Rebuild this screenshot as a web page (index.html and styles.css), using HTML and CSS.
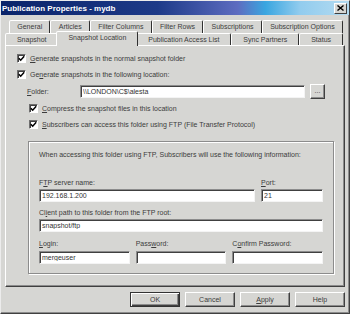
FILE: index.html
```html
<!DOCTYPE html>
<html lang="en">
<head>
<meta charset="UTF-8" />
<title>Publication Properties - mydb</title>
<link rel="stylesheet" href="styles.css">
</head>
<body>
  <div class="dialog">

    <!-- barra de titulo -->
    <div class="titlebar">
      <span class="title">Publication Properties - mydb</span>
      <span class="close">
        <svg width="7" height="6" viewBox="0 0 7 6"><path d="M0.5 0.5 L6.5 5.5 M6.5 0.5 L0.5 5.5" stroke="#000" stroke-width="1.4" fill="none"/></svg>
      </span>
    </div>

    <div class="content">
      <!-- abas -->
      <div class="tabs">
        <div class="tab-row back">
          <div class="tab">General</div>
          <div class="tab">Articles</div>
          <div class="tab">Filter Columns</div>
          <div class="tab">Filter Rows</div>
          <div class="tab">Subscriptions</div>
          <div class="tab">Subscription Options</div>
        </div>
        <div class="tab-row front">
          <div class="tab">Snapshot</div>
          <div class="tab active">Snapshot Location</div>
          <div class="tab">Publication Access List</div>
          <div class="tab">Sync Partners</div>
          <div class="tab">Status</div>
        </div>
      </div>

      <!-- painel da aba -->
      <div class="panel">
        <label class="check-row first">
          <span class="checkbox"><svg width="7" height="7" viewBox="0 0 7 7"><path d="M0.8 3.2 L2.7 5.2 L6.2 1.2" stroke="#000" stroke-width="1.5" fill="none"/></svg></span>
          <span><u>G</u>enerate snapshots in the normal snapshot folder</span>
        </label>
        <label class="check-row">
          <span class="checkbox"><svg width="7" height="7" viewBox="0 0 7 7"><path d="M0.8 3.2 L2.7 5.2 L6.2 1.2" stroke="#000" stroke-width="1.5" fill="none"/></svg></span>
          <span>Ge<u>n</u>erate snapshots in the following location:</span>
        </label>

        <div class="folder-row">
          <span class="folder-label"><u>F</u>older:</span>
          <input class="text-box folder-box" type="text" value="\\LONDON\C$\alesta" readonly>
          <span class="browse">...</span>
        </div>

        <label class="check-row sub">
          <span class="checkbox"><svg width="7" height="7" viewBox="0 0 7 7"><path d="M0.8 3.2 L2.7 5.2 L6.2 1.2" stroke="#000" stroke-width="1.5" fill="none"/></svg></span>
          <span><u>C</u>ompress the snapshot files in this location</span>
        </label>
        <label class="check-row sub">
          <span class="checkbox"><svg width="7" height="7" viewBox="0 0 7 7"><path d="M0.8 3.2 L2.7 5.2 L6.2 1.2" stroke="#000" stroke-width="1.5" fill="none"/></svg></span>
          <span><u>S</u>ubscribers can access this folder using FTP (File Transfer Protocol)</span>
        </label>

        <!-- caixa FTP -->
        <div class="group">
          <p class="info">When accessing this folder using FTP, Subscribers will use the following information:</p>

          <div class="grid server">
            <div class="field">
              <span class="field-label">F<u>T</u>P server name:</span>
              <input class="text-box" type="text" value="192.168.1.200" readonly>
            </div>
            <div class="field">
              <span class="field-label"><u>P</u>ort:</span>
              <input class="text-box" type="text" value="21" readonly>
            </div>
          </div>

          <div class="field path">
            <span class="field-label">Cl<u>i</u>ent path to this folder from the FTP root:</span>
            <input class="text-box" type="text" value="snapshot/ftp" readonly>
          </div>

          <div class="grid login">
            <div class="field">
              <span class="field-label"><u>L</u>ogin:</span>
              <input class="text-box" type="text" value="mergeuser" readonly>
            </div>
            <div class="field">
              <span class="field-label">Pass<u>w</u>ord:</span>
              <input class="text-box" type="text" value="" readonly>
            </div>
            <div class="field">
              <span class="field-label">C<u>o</u>nfirm Password:</span>
              <input class="text-box" type="text" value="" readonly>
            </div>
          </div>
        </div>
      </div>

      <!-- botoes -->
      <div class="buttons">
        <button class="btn default">OK</button>
        <button class="btn">Cancel</button>
        <button class="btn"><u>A</u>pply</button>
        <button class="btn">Help</button>
      </div>
    </div>
  </div>
</body>
</html>
```

FILE: styles.css
```css
/* Reset */
* {
  margin: 0; padding: 0; box-sizing: border-box;
}

body {
  background: #fff;
  font-family: "Liberation Sans", Arial, sans-serif;
  font-size: 7px;
  color: #3c3c3c;
}

u {
  text-decoration: underline;
  text-underline-offset: 1px;
}

/* Janela */
.dialog {
  width: 350px;
  height: 314px;
  background: #d6d6d3;
  border: 1px solid;
  border-color: #ececec #404040 #404040 #ececec;
  box-shadow: inset -1px -1px #8c8c8c;
  display: flex;
  flex-direction: column;
}

.titlebar {
  height: 14px;
  display: flex;
  align-items: center;
  justify-content: space-between;
  padding: 0 2px 0 1px;
  background: linear-gradient(to right, #0a246a 0%, #1d3a88 45%, #5d6cc0 68%, #3aa6e0 76%, #92ccee 86%, #b4dbf1 100%);
}

.title {
  color: #fff;
  font-weight: bold;
  font-size: 8px;
}

.close {
  width: 13px;
  height: 11px;
  background: #d6d6d3;
  border: 1px solid;
  border-color: #fff #404040 #404040 #fff;
  display: flex;
  align-items: center;
  justify-content: center;
}

.content {
  padding: 5px 4px 0 4px;
}

/* Abas */
.tab-row {
  display: flex;
}
.tab-row.back {
  height: 13px;
  margin: 0 2px 0 4px;
}
.tab-row.front {
  height: 12px;
  margin: 0 2px 0 0;
}

.tab {
  flex: 1 1 auto;
  text-align: center;
  line-height: 11px;
  white-space: nowrap;
  border: 1px solid;
  border-bottom: none;
  border-color: #fff #303030 transparent #fff;
  border-radius: 2px 2px 0 0;
  background: #d6d6d3;
}

.tab.active {
  height: 15px;
  margin: -2px -2px 0;
  line-height: 12px;
  position: relative;
  z-index: 1;
}

/* Painel */
.panel {
  height: 242px;
  border: 1px solid;
  border-color: #fff #404040 #404040 #fff;
  box-shadow: inset -1px -1px #8c8c8c;
  padding: 6px 0 0 11px;
}

.check-row {
  display: flex;
  align-items: center;
  gap: 4px;
  height: 12px;
  margin-top: 4px;
}
.check-row.first {
  margin-top: 0;
}
.check-row.sub {
  margin-left: 12px;
}

.checkbox {
  width: 9px;
  height: 9px;
  background: #fff;
  border: 1px solid;
  border-color: #6e6e6e #fff #fff #6e6e6e;
  box-shadow: inset 1px 1px #404040;
  display: flex;
  align-items: center;
  justify-content: center;
}

.folder-row {
  display: flex;
  align-items: center;
  margin: 5px 0 0 10px;
  height: 13px;
}
.folder-label {
  width: 53px;
}
.browse {
  width: 15px;
  height: 15px;
  margin-left: 5px;
  border: 1px solid;
  border-color: #fff #404040 #404040 #fff;
  box-shadow: inset -1px -1px #8c8c8c;
  text-align: center;
  line-height: 11px;
}

.text-box {
  display: block;
  width: 100%;
  height: 13px;
  background: #fff;
  border: 1px solid;
  border-color: #8c8c8c #f4f4f4 #f4f4f4 #8c8c8c;
  box-shadow: inset 1px 1px #404040;
  padding: 0 2px;
  font: inherit;
  color: #333;
  outline: none;
}
.folder-row .text-box {
  width: 225px;
}

/* Caixa FTP */
.group {
  margin: 11px 10px 0 11px;
  border: 1px solid #8c8c8c;
  box-shadow: 1px 1px 0 #fff, inset 1px 1px 0 #fff;
  padding: 8px 10px 9px;
}

.info {
  line-height: 10px;
}

.grid {
  display: grid;
  gap: 6px;
}
.grid.server {
  grid-template-columns: 1fr 62px;
  margin-top: 18px;
}
.grid.login {
  grid-template-columns: 1fr 1fr 1fr;
  margin-top: 7px;
}

.field-label {
  display: block;
  line-height: 10px;
  margin-bottom: 1px;
}
.login .field-label {
  margin-bottom: 2px;
}
.field.path {
  margin-top: 6px;
}

/* Botoes */
.buttons {
  display: flex;
  justify-content: flex-end;
  gap: 5px;
  margin-top: 5px;
}

.btn {
  width: 50px;
  height: 15px;
  background: #d6d6d3;
  border: 1px solid;
  border-color: #fff #404040 #404040 #fff;
  box-shadow: inset -1px -1px #8c8c8c;
  font: inherit;
  color: #3c3c3c;
}
.btn.default {
  border-color: #333;
  box-shadow: inset 1px 1px #fff, inset -1px -1px #404040, inset -2px -2px #8c8c8c;
}
```
